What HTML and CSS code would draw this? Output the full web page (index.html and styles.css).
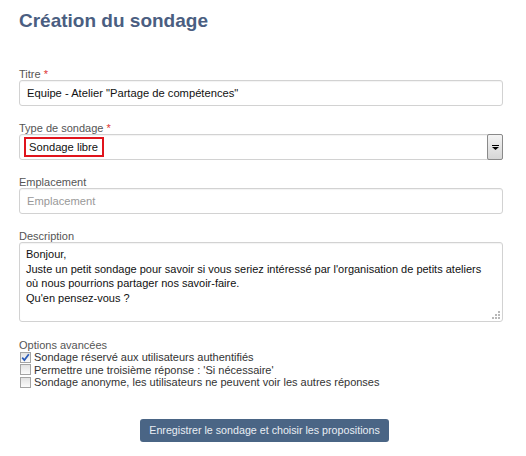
FILE: index.html
```html
<!DOCTYPE html>
<html lang="fr">
<head>
<meta charset="utf-8">
<title>Création du sondage</title>
<link rel="stylesheet" href="styles.css">
</head>
<body>
<div class="page">
  <h1 class="title">Création du sondage</h1>

  <div class="field">
    <div class="label">Titre <span class="req">*</span></div>
    <div class="control">Equipe - Atelier "Partage de compétences"</div>
  </div>

  <div class="field">
    <div class="label">Type de sondage <span class="req">*</span></div>
    <div class="control select">
      <span class="highlight">Sondage libre</span>
      <span class="select-btn">
        <svg width="7" height="5" viewBox="0 0 7 5"><rect x="0" y="0" width="7" height="1" fill="#000"/><path d="M0 2h7L3.5 5z" fill="#000"/></svg>
      </span>
    </div>
  </div>

  <div class="field">
    <div class="label">Emplacement</div>
    <div class="control placeholder">Emplacement</div>
  </div>

  <div class="field">
    <div class="label">Description</div>
    <div class="control textarea">Bonjour,<br>Juste un petit sondage pour savoir si vous seriez intéressé par l'organisation de petits ateliers<br>où nous pourrions partager nos savoir-faire.<br>Qu'en pensez-vous ?
      <svg class="grip" width="8" height="8" viewBox="0 0 8 8"><g fill="#b8b8b8"><rect x="6" y="0" width="2" height="2"/><rect x="3" y="3" width="2" height="2"/><rect x="6" y="3" width="2" height="2"/><rect x="0" y="6" width="2" height="2"/><rect x="3" y="6" width="2" height="2"/><rect x="6" y="6" width="2" height="2"/></g></svg>
    </div>
  </div>

  <div class="options">
    <div class="label">Options avancées</div>
    <div class="opt"><span class="cb checked"><svg width="9" height="9" viewBox="0 0 9 9"><path d="M1.2 4.6l2.2 2.5L7.8 1.3" fill="none" stroke="#2a5bb8" stroke-width="1.7"/></svg></span>Sondage réservé aux utilisateurs authentifiés</div>
    <div class="opt"><span class="cb"></span>Permettre une troisième réponse : 'Si nécessaire'</div>
    <div class="opt"><span class="cb"></span>Sondage anonyme, les utilisateurs ne peuvent voir les autres réponses</div>
  </div>

  <div class="actions">
    <span class="button">Enregistrer le sondage et choisir les propositions</span>
  </div>
</div>
</body>
</html>
```

FILE: styles.css
```css
html, body {
  margin: 0;
  padding: 0;
  background: #ffffff;
}
body {
  font-family: "Liberation Sans", Arial, sans-serif;
  font-size: 11px;
  color: #333;
}
.page {
  width: 484px;
  padding: 10px 0 0 19px;
}
.title {
  margin: 0 0 36px 0;
  font-size: 19px;
  line-height: 22px;
  font-weight: bold;
  color: #4a5e81;
}
.field {
  margin-bottom: 16px;
}
.label {
  color: #555;
  font-size: 11px;
  line-height: 12px;
}
.req {
  color: #d33;
}
.control {
  position: relative;
  box-sizing: border-box;
  height: 26px;
  border: 1px solid #d2d2d2;
  border-radius: 3px;
  box-shadow: inset 0 1px 1px rgba(0,0,0,0.05);
  padding: 0 7px;
  font-size: 11.2px;
  line-height: 24px;
  color: #111;
  display: flex;
  align-items: center;
  white-space: nowrap;
}
.placeholder {
  color: #999;
}
.select {
  padding-left: 4px;
}
.highlight {
  box-sizing: border-box;
  border: 2px solid #e0141c;
  height: 20px;
  line-height: 16px;
  padding: 0 4px 0 3px;
  white-space: nowrap;
}
.select-btn {
  position: absolute;
  right: -1px;
  top: -1px;
  bottom: -1px;
  width: 14px;
  border: 1px solid #8a8a8a;
  border-radius: 2px;
  background: linear-gradient(#f4f4f4, #d6d6d6);
  display: flex;
  align-items: center;
  justify-content: center;
}
.textarea {
  display: block;
  height: 80px;
  padding: 4px 6px;
  line-height: 14.5px;
  font-size: 11px;
  white-space: normal;
}
.grip {
  position: absolute;
  right: 2px;
  bottom: 2px;
}
.options {
  margin-top: 17px;
}
.opt {
  display: flex;
  align-items: center;
  height: 12.5px;
  line-height: 12.5px;
  color: #333;
}
.cb {
  box-sizing: border-box;
  width: 11px;
  height: 11px;
  margin: 0 3px 0 1px;
  border: 1px solid #a4a4a4;
  background: linear-gradient(#e2e2e2, #fbfbfb);
  display: flex;
  align-items: center;
  justify-content: center;
}
.actions {
  margin-top: 30.5px;
  width: 491px;
  display: flex;
  justify-content: center;
}
.button {
  display: inline-block;
  width: 249px;
  text-align: center;
  background: #4a6585;
  color: #e9eef4;
  font-size: 10.7px;
  line-height: 23px;
  border-radius: 3px;
}
```
